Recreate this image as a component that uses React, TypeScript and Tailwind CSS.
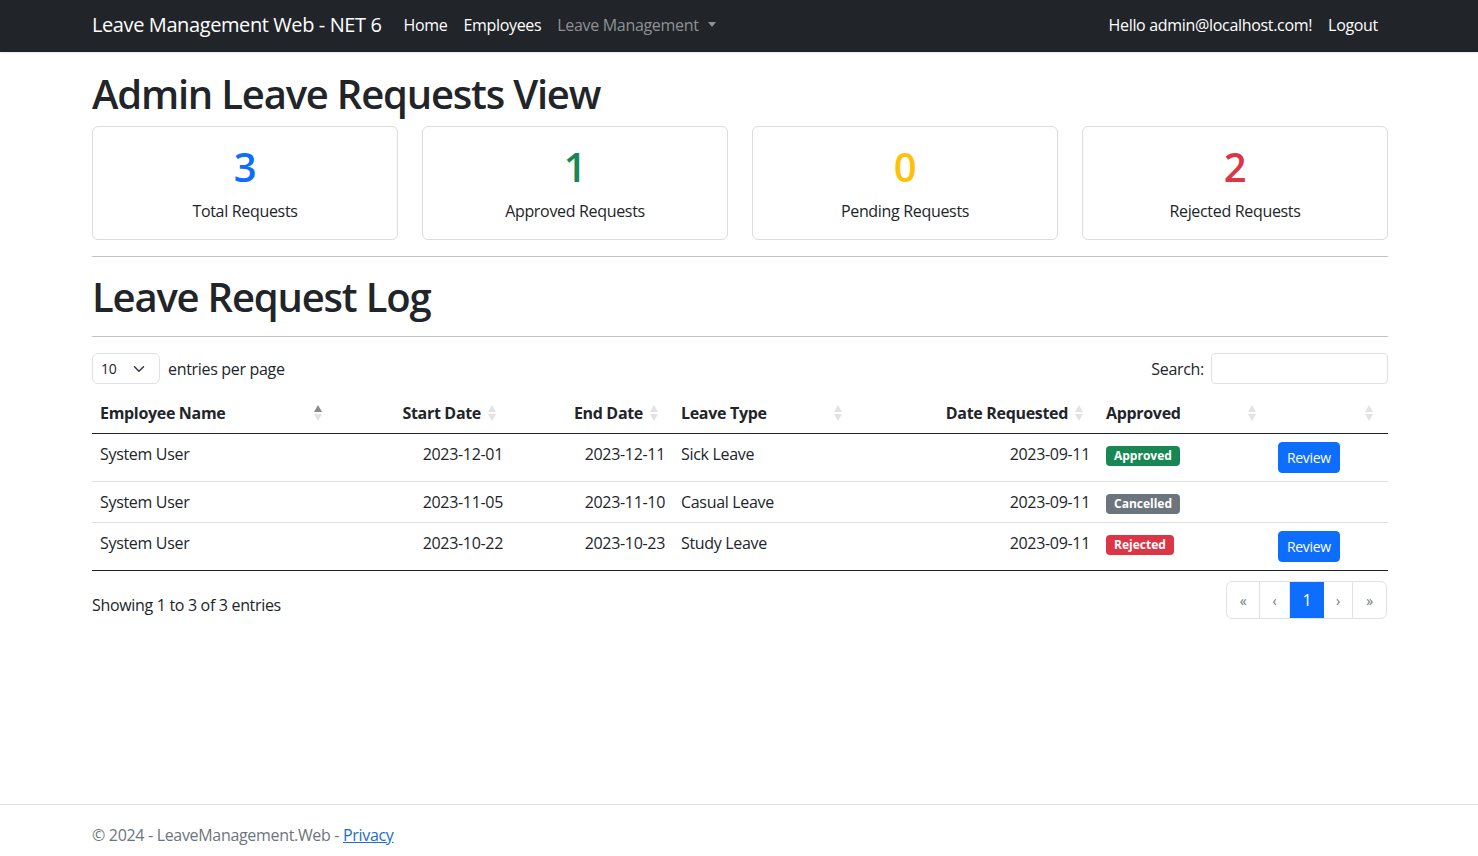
import React from "react";

type Row = {
    name: string;
    start: string;
    end: string;
    type: string;
    requested: string;
    status: "Approved" | "Cancelled" | "Rejected";
    review: boolean;
};

const rows: Row[] = [
    { name: "System User", start: "2023-12-01", end: "2023-12-11", type: "Sick Leave", requested: "2023-09-11", status: "Approved", review: true },
    { name: "System User", start: "2023-11-05", end: "2023-11-10", type: "Casual Leave", requested: "2023-09-11", status: "Cancelled", review: false },
    { name: "System User", start: "2023-10-22", end: "2023-10-23", type: "Study Leave", requested: "2023-09-11", status: "Rejected", review: true },
];

const badgeClass = {
    Approved: "bg-[#198754]",
    Cancelled: "bg-[#6c757d]",
    Rejected: "bg-[#dc3545]",
};

const SortIcon = ({ active = false }: { active?: boolean }) => (
    <svg width="8" height="16" viewBox="0 0 8 16" className="block">
        <polygon points="4,0 8,7 0,7" fill={active ? "#8a8a8a" : "#e2e2e2"} />
        <polygon points="0,9 8,9 4,16" fill="#e2e2e2" />
    </svg>
);

const StatCard = ({ value, label, color }: { value: string; label: string; color: string }) => (
    <div className="border border-[#dcdcdc] rounded-md p-4 text-center">
        <div className={`text-[40px] leading-[48px] font-semibold mb-2 ${color}`}>{value}</div>
        <div className="text-base leading-6">{label}</div>
    </div>
);

export default function App() {
    return (
        <div className="min-h-[856px] flex flex-col bg-white text-[#212529] font-['Open_Sans',sans-serif] tracking-[-0.02em]">
            <nav className="h-[52px] bg-[#212529] shadow-[0_1px_2px_rgba(0,0,0,0.1)]">
                <div className="w-[1296px] ml-[92px] h-full flex items-center justify-between pb-[3px]">
                    <div className="flex items-center">
                        <span className="text-white text-[20px] tracking-[-0.02em] mr-[14px]">Leave Management Web - NET 6</span>
                        <a className="text-white px-2 text-base">Home</a>
                        <a className="text-white px-2 text-base">Employees</a>
                        <a className="text-[#8f9194] px-2 text-base flex items-center">
                            Leave Management
                            <span className="ml-[9px] border-t-[5px] border-t-[#8f9194] border-x-[4px] border-x-transparent w-0 h-0" />
                        </a>
                    </div>
                    <div className="flex items-center mr-[2px]">
                        <span className="text-white text-base px-2">Hello admin@localhost.com!</span>
                        <a className="text-white text-base px-2">Logout</a>
                    </div>
                </div>
            </nav>

            <main className="flex-1 w-[1296px] ml-[92px] pt-[18px]">
                <h1 className="text-[40px] leading-[48px] font-semibold tracking-[-0.03em] mb-2">Admin Leave Requests View</h1>
                <div className="grid grid-cols-4 gap-6">
                    <StatCard value="3" label="Total Requests" color="text-[#0d6efd]" />
                    <StatCard value="1" label="Approved Requests" color="text-[#198754]" />
                    <StatCard value="0" label="Pending Requests" color="text-[#ffc107]" />
                    <StatCard value="2" label="Rejected Requests" color="text-[#dc3545]" />
                </div>
                <hr className="mt-4 mb-4 border-t border-[#c4c4c4]" />
                <h1 className="text-[40px] leading-[48px] font-semibold tracking-[-0.03em]">Leave Request Log</h1>
                <hr className="mt-[15px] border-t border-[#c4c4c4]" />

                <div className="flex items-center justify-between mt-4">
                    <div className="flex items-center">
                        <div className="w-[68px] h-[31px] border border-[#dee2e6] rounded-md flex items-center justify-between pl-2 pr-[14px] text-sm">
                            <span>10</span>
                            <svg width="12" height="12" viewBox="0 0 16 16">
                                <path d="M2 5l6 6 6-6" fill="none" stroke="#343a40" strokeWidth="2" strokeLinecap="round" strokeLinejoin="round" />
                            </svg>
                        </div>
                        <span className="ml-2 text-base">entries per page</span>
                    </div>
                    <div className="flex items-center">
                        <span className="text-base mr-[7px]">Search:</span>
                        <div className="w-[177px] h-[31px] border border-[#dee2e6] rounded-[4px]" />
                    </div>
                </div>

                <table className="w-full mt-[9px] table-fixed border-collapse text-base">
                    <colgroup>
                        <col className="w-[238px]" />
                        <col className="w-[181px]" />
                        <col className="w-[162px]" />
                        <col className="w-[177px]" />
                        <col className="w-[248px]" />
                        <col className="w-[166px]" />
                        <col className="w-[124px]" />
                    </colgroup>
                    <thead>
                        <tr className="border-b border-[#212529]">
                            <th className="text-left font-bold p-2 leading-6">
                                <div className="flex items-center justify-between">
                                    <span>Employee Name</span>
                                    <SortIcon active />
                                </div>
                            </th>
                            <th className="font-bold p-2 leading-6">
                                <div className="flex items-center justify-end gap-[7px] pr-[7px]">
                                    <span>Start Date</span>
                                    <SortIcon />
                                </div>
                            </th>
                            <th className="font-bold p-2 leading-6">
                                <div className="flex items-center justify-end gap-[7px] pr-[7px]">
                                    <span>End Date</span>
                                    <SortIcon />
                                </div>
                            </th>
                            <th className="text-left font-bold p-2 leading-6">
                                <div className="flex items-center justify-between">
                                    <span>Leave Type</span>
                                    <SortIcon />
                                </div>
                            </th>
                            <th className="font-bold p-2 leading-6">
                                <div className="flex items-center justify-end gap-[7px] pr-[7px]">
                                    <span>Date Requested</span>
                                    <SortIcon />
                                </div>
                            </th>
                            <th className="text-left font-bold p-2 leading-6">
                                <div className="flex items-center justify-between">
                                    <span>Approved</span>
                                    <SortIcon />
                                </div>
                            </th>
                            <th className="p-2 leading-6">
                                <div className="flex items-center justify-end pr-[7px] h-6">
                                    <SortIcon />
                                </div>
                            </th>
                        </tr>
                    </thead>
                    <tbody>
                        {rows.map((r, i) => (
                            <tr key={i} className={i === rows.length - 1 ? "border-b border-[#212529]" : "border-b border-[#dee2e6]"}>
                                <td className="p-2 leading-6 align-top">{r.name}</td>
                                <td className="p-2 leading-6 align-top text-right">{r.start}</td>
                                <td className="p-2 leading-6 align-top text-right">{r.end}</td>
                                <td className="p-2 leading-6 align-top">{r.type}</td>
                                <td className="p-2 leading-6 align-top text-right">{r.requested}</td>
                                <td className="p-2 leading-6 align-top">
                                    <span className={`inline-block text-white text-xs font-bold leading-none px-[8px] py-[4px] rounded-[4px] tracking-normal ${badgeClass[r.status]}`}>
                                        {r.status}
                                    </span>
                                </td>
                                <td className="py-2 pl-[14px] pr-2 align-top">
                                    {r.review && (
                                        <button className="bg-[#0d6efd] text-white text-sm leading-[21px] px-2 py-1 rounded-[4px] border border-[#0d6efd]">
                                            Review
                                        </button>
                                    )}
                                </td>
                            </tr>
                        ))}
                    </tbody>
                </table>

                <div className="flex items-start justify-between mt-[10px]">
                    <span className="text-base leading-6 mt-[12px]">Showing 1 to 3 of 3 entries</span>
                    <div className="flex h-[38px] border border-[#dee2e6] rounded-md overflow-hidden text-[#6c757d] text-[14px] mr-px">
                        <span className="w-[33px] flex items-center justify-center border-r border-[#dee2e6]">«</span>
                        <span className="w-[30px] flex items-center justify-center border-r border-[#dee2e6]">‹</span>
                        <span className="w-[34px] flex items-center justify-center bg-[#0d6efd] text-white text-base">1</span>
                        <span className="w-[29px] flex items-center justify-center border-r border-[#dee2e6]">›</span>
                        <span className="w-[33px] flex items-center justify-center">»</span>
                    </div>
                </div>
            </main>

            <footer className="border-t border-[#dee2e6] pt-[18px] pb-[9px]">
                <div className="w-[1296px] ml-[92px] text-[#6c757d] text-base leading-6">
                    © 2024 - LeaveManagement.Web - <a className="text-[#1b6ec2] underline">Privacy</a>
                </div>
            </footer>
        </div>
    );
}
